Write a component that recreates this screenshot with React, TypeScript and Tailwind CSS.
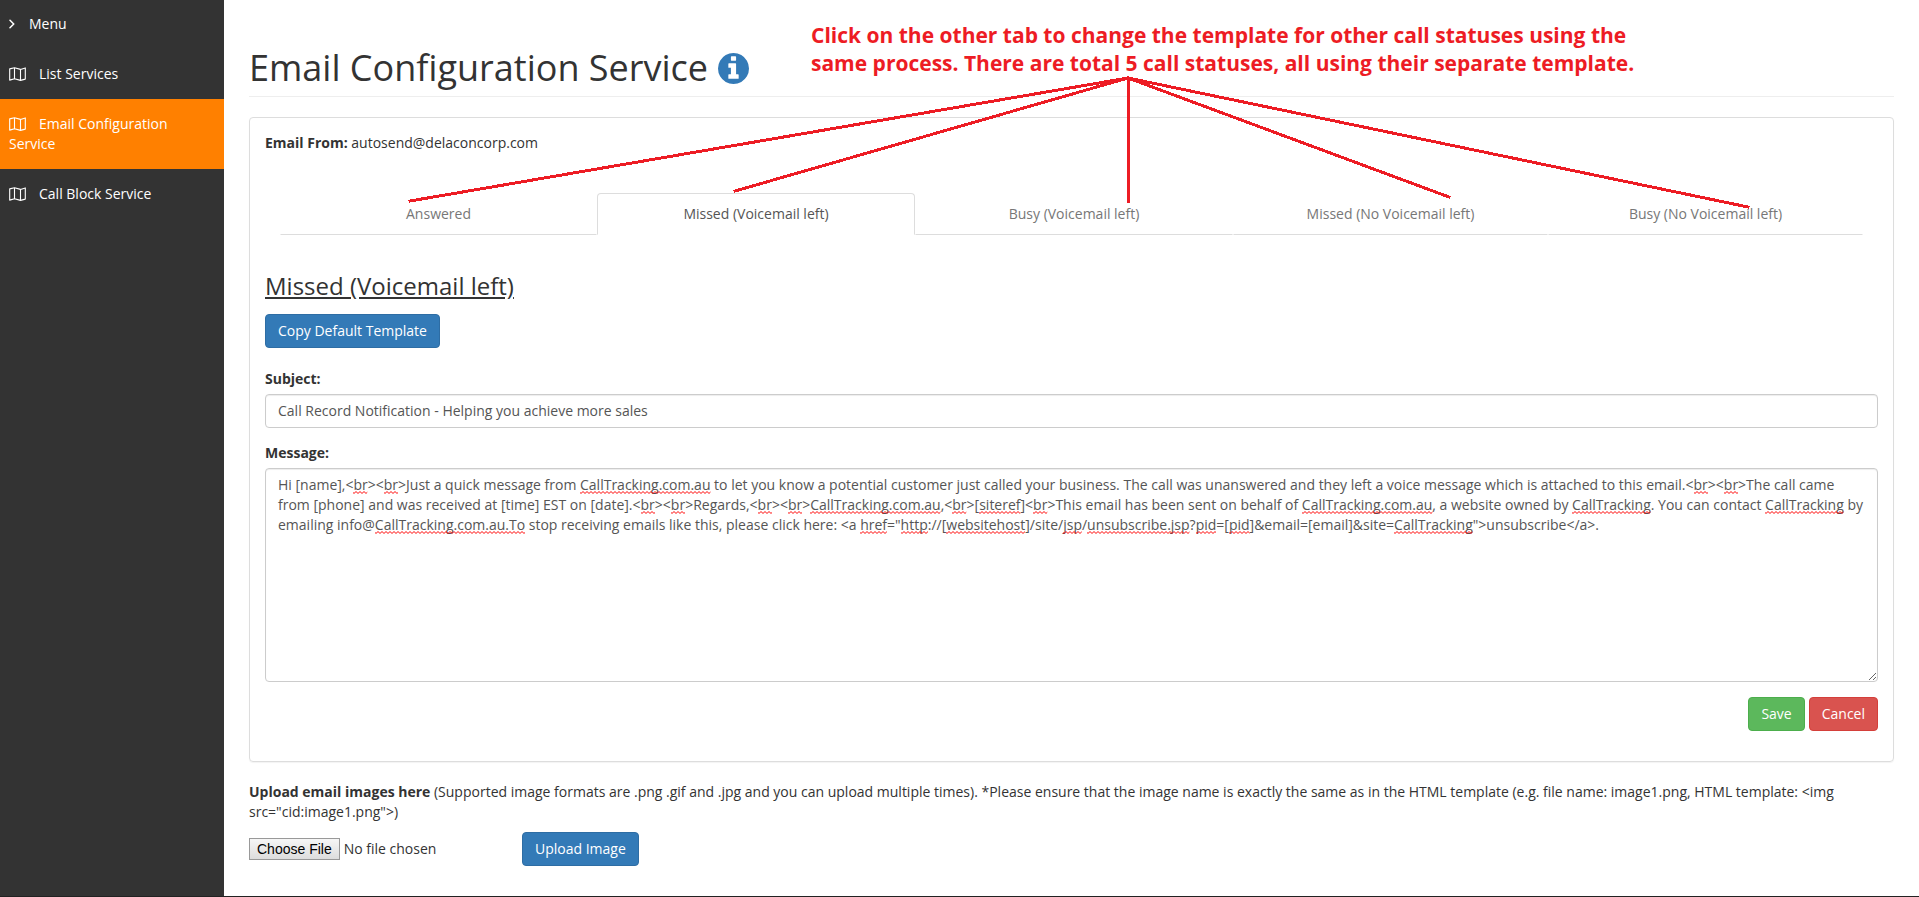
import React, { useState } from "react";
import clsx from "clsx";

const menuItems = ["List Services", "Email Configuration Service", "Call Block Service"];

const tabs = [
  "Answered",
  "Missed (Voicemail left)",
  "Busy (Voicemail left)",
  "Missed (No Voicemail left)",
  "Busy (No Voicemail left)",
];

const defaultMessage =
  'Hi [name],<br><br>Just a quick message from CallTracking.com.au to let you know a potential customer just called your business. The call was unanswered and they left a voice message which is attached to this email.<br><br>The call came from [phone] and was received at [time] EST on [date].<br><br>Regards,<br><br>CallTracking.com.au,<br>[siteref]<br>This email has been sent on behalf of CallTracking.com.au, a website owned by CallTracking. You can contact CallTracking by emailing info@CallTracking.com.au.To stop receiving emails like this, please click here: <a href="http://[websitehost]/site/jsp/unsubscribe.jsp?pid=[pid]&email=[email]&site=CallTracking">unsubscribe</a>.';

// words the spell checker does not know
const unknownWords =
  /(CallTracking\.com\.au\.To|CallTracking\.com\.au|CallTracking|unsubscribe\.jsp|websitehost|siteref|\bhref|\bhttp|\bjsp|\bpid|\bbr\b)/;

const buttonStyles = {
  primary: "border-[#2e6da4] bg-[#337ab7]",
  success: "border-[#4cae4c] bg-[#5cb85c]",
  danger: "border-[#d43f3a] bg-[#d9534f]",
};

type ButtonProps = {
  variant: keyof typeof buttonStyles;
  children: React.ReactNode;
};

const Button = ({ variant, children }: ButtonProps) => (
  <button
    type="button"
    className={clsx(
      "rounded-sm border px-3 py-1.5 text-sm/5 text-white",
      buttonStyles[variant]
    )}
  >
    {children}
  </button>
);

const InfoIcon = () => (
  <svg viewBox="128 128 1536 1536" className="h-[31px] w-[31px] fill-[#337ab7]">
    <path d="M1152 1376v-160q0-14-9-23t-23-9h-96v-512q0-14-9-23t-23-9h-320q-14 0-23 9t-9 23v160q0 14 9 23t23 9h96v320h-96q-14 0-23 9t-9 23v160q0 14 9 23t23 9h448q14 0 23-9t9-23zm-128-896v-160q0-14-9-23t-23-9h-192q-14 0-23 9t-9 23v160q0 14 9 23t23 9h192q14 0 23-9t9-23zm640 416q0 209-103 385.5t-279.5 279.5-385.5 103-385.5-103-279.5-279.5-103-385.5 103-385.5 279.5-279.5 385.5-103 385.5 103 279.5 279.5 103 385.5z" />
  </svg>
);

const ArrowIcon = () => (
  <svg viewBox="0 0 8 10" className="mr-3 h-2.5 w-2" fill="none" stroke="white" strokeWidth="1.5">
    <path d="M1 1.2 4.7 5 1 8.8" strokeLinecap="round" />
  </svg>
);

const MapIcon = () => (
  <svg
    viewBox="0 0 17 14"
    className="mr-[13px] inline h-3.5 w-[17px] align-[-2px]"
    fill="none"
    stroke="white"
    strokeWidth="1.1"
    strokeLinejoin="round"
  >
    <path d="M.7 1.9 5.5.7l6 1.7L16.3.9v11.2l-4.8 1.3-6-1.7L.7 13.1zM5.5.7v11M11.5 2.4v11" />
  </svg>
);

const Squiggle = () => (
  <svg className="visible absolute bottom-0 left-0 h-[3px] w-full" fill="none" stroke="red">
    <defs>
      <pattern id="squiggle" width="4" height="3" patternUnits="userSpaceOnUse">
        <path d="M-1 0.5 1 2.5 3 0.5 5 2.5" />
      </pattern>
    </defs>
    <rect width="100%" height="3" fill="url(#squiggle)" stroke="none" />
  </svg>
);

const Sidebar = () => (
  <nav className="w-56 shrink-0 bg-[#333] text-sm/5 text-white">
    <a href="#menu" className="flex items-center px-[9px] pt-3.5 pb-[15px]">
      <ArrowIcon />
      Menu
    </a>
    {menuItems.map((item, i) => (
      <a
        key={item}
        href="#service"
        className={clsx("block px-[9px] py-[15px]", i === 1 && "bg-[#ff8000]")}
      >
        <MapIcon />
        {item}
      </a>
    ))}
  </nav>
);

const MessageField = () => {
  const [message, setMessage] = useState(defaultMessage);

  return (
    <div className="grid">
      <textarea
        id="message"
        rows={10}
        spellCheck={false}
        value={message}
        onChange={(e) => setMessage(e.target.value)}
        className="col-start-1 row-start-1 block w-full rounded-sm border border-[#ccc] px-3 py-1.5 text-sm/5 text-[#555] shadow-[inset_0_1px_1px_rgba(0,0,0,0.075)]"
      />
      {/* hidden copy of the text, only the underlines of unknown words show */}
      <div
        aria-hidden="true"
        className="pointer-events-none invisible col-start-1 row-start-1 border border-transparent px-3 py-1.5 text-sm/5 break-words whitespace-pre-wrap"
      >
        {message.split(unknownWords).map((part, i) =>
          i % 2 ? (
            <span key={i} className="relative">
              {part}
              <Squiggle />
            </span>
          ) : (
            part
          )
        )}
      </div>
    </div>
  );
};

const Annotation = () => (
  <div className="pointer-events-none absolute top-0 left-0 text-[#ed1c24]">
    <p className="absolute top-[21px] left-[587px] text-[21px]/7 font-bold whitespace-nowrap">
      Click on the other tab to change the template for other call statuses using the
      <br />
      same process. There are total 5 call statuses, all using their separate template.
    </p>
    <svg
      width="1600"
      height="240"
      fill="none"
      stroke="currentColor"
      strokeWidth="3"
      strokeLinecap="square"
      shapeRendering="crispEdges"
    >
      <path d="M904 78 186 201M904 78 511 191M904 78V201M904 78l321 119M904 78l620 129" />
    </svg>
  </div>
);

export default function App() {
  const [active, setActive] = useState(1);
  const [subject, setSubject] = useState(
    "Call Record Notification - Helping you achieve more sales"
  );

  return (
    <div className="flex min-h-screen border-b border-[#222] bg-white font-['Open_Sans','Noto_Sans',sans-serif] text-sm/5 text-[#333]">
      <Sidebar />
      <main className="relative min-w-0 grow px-[25px] pt-12">
        <h1 className="mb-5 flex items-center gap-2.5 border-b border-[#eee] pb-2 text-4xl/10 font-normal">
          Email Configuration Service
          <InfoIcon />
        </h1>

        <section className="mb-5 rounded-sm border border-[#ddd] px-[15px] pt-[15px] pb-[30px] shadow-[0_1px_1px_rgba(0,0,0,0.05)]">
          <p>
            <b className="font-bold">Email From:</b> autosend@delaconcorp.com
          </p>

          <div
            role="tablist"
            className="mx-[15px] mt-10 grid grid-cols-[317fr_318fr_318fr_315fr_315fr]"
          >
            {tabs.map((tab, i) => (
              <button
                key={tab}
                type="button"
                role="tab"
                aria-selected={i === active}
                onClick={() => setActive(i)}
                className={clsx(
                  "rounded-t-sm border px-[15px] py-2.5",
                  i === active
                    ? "border-[#ddd] border-b-white text-[#555]"
                    : "border-transparent border-b-[#ddd] text-[#777]"
                )}
              >
                {tab}
              </button>
            ))}
          </div>

          <h3 className="mt-[37px] mb-3.5 text-2xl/7 font-normal underline">{tabs[active]}</h3>
          <Button variant="primary">Copy Default Template</Button>

          <label htmlFor="subject" className="mt-[21px] mb-[5px] block font-bold">
            Subject:
          </label>
          <input
            id="subject"
            type="text"
            value={subject}
            onChange={(e) => setSubject(e.target.value)}
            className="block w-full rounded-sm border border-[#ccc] px-3 py-1.5 text-[#555] shadow-[inset_0_1px_1px_rgba(0,0,0,0.075)]"
          />

          <label htmlFor="message" className="mt-[15px] mb-[5px] block font-bold">
            Message:
          </label>
          <MessageField />

          <div className="mt-[15px] flex justify-end gap-1">
            <Button variant="success">Save</Button>
            <Button variant="danger">Cancel</Button>
          </div>
        </section>

        <label htmlFor="image" className="block">
          <b className="font-bold">Upload email images here</b> (Supported image formats are
          .png .gif and .jpg and you can upload multiple times). *Please ensure that the image
          name is exactly the same as in the HTML template (e.g. file name: image1.png, HTML
          template: &lt;img src="cid:image1.png"&gt;)
        </label>
        <div className="mt-2.5 mb-[30px] flex items-center">
          <input
            id="image"
            type="file"
            className="w-[273px] file:mr-1 file:h-[22px] file:border file:border-[#999] file:bg-linear-to-b file:from-[#f6f6f6] file:to-[#ddd] file:px-[7px] file:font-['Liberation_Sans',sans-serif] file:text-sm/5 file:text-black"
          />
          <Button variant="primary">Upload Image</Button>
        </div>

        <Annotation />
      </main>
    </div>
  );
}
